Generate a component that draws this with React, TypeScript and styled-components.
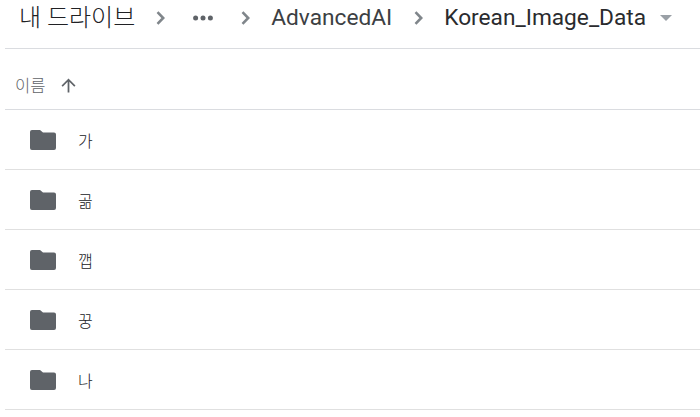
import styled, { createGlobalStyle } from "styled-components";

const GlobalStyle = createGlobalStyle`
  html, body {
    margin: 0;
    padding: 0;
    background: #fff;
    overflow: hidden;
  }
`;

const Page = styled.div`
  width: 700px;
  height: 417px;
  padding-left: 5px;
  box-sizing: border-box;
  font-family: Roboto, "Noto Sans CJK KR", sans-serif;
`;

const Breadcrumbs = styled.div`
  height: 48px;
  box-sizing: content-box;
  display: flex;
  align-items: center;
  padding-left: 14px;
  border-bottom: 1px solid #dadce0;
`;

const Crumb = styled.span`
  font-size: 22.7px;
  line-height: 24px;
  margin-bottom: 12px;
  color: #3c4043;
  white-space: nowrap;
`;

const RootCrumb = styled(Crumb)`
  font-size: 24px;
  font-weight: 300;
  color: #202124;
`;

const CurrentCrumb = styled(Crumb)`
  color: #2a2b2e;
`;

const Chevron = styled.svg<{ $before: number; $after: number }>`
  width: 9px;
  height: 14px;
  margin: 0 ${(p) => p.$after}px 12px ${(p) => p.$before}px;
  flex: none;
  fill: none;
  stroke: #80868b;
  stroke-width: 2.6;
`;

const Dots = styled.svg`
  width: 20px;
  height: 6px;
  margin-bottom: 12px;
  fill: #5f6368;
  flex: none;
`;

const Caret = styled.svg`
  width: 12px;
  height: 6px;
  margin: 0 0 12px 14px;
  fill: #9aa0a6;
  flex: none;
`;

const SortHeader = styled.div`
  height: 61px;
  display: flex;
  align-items: center;
  padding: 12px 0 0 10px;
  box-sizing: border-box;
  border-bottom: 1px solid #dadce0;
  font-size: 16.5px;
  font-weight: 300;
  color: #5f6368;
`;

const SortIcon = styled.svg`
  width: 21px;
  height: 21px;
  fill: #5f6368;
  margin-left: 13px;
`;

const Row = styled.div`
  height: 60px;
  display: flex;
  align-items: center;
  padding-left: 25px;
  box-sizing: border-box;
  border-bottom: 1px solid #e0e0e0;
`;

const FolderIcon = styled.svg`
  width: 26px;
  height: 20px;
  fill: #5f6368;
  flex: none;
`;

const RowName = styled.span`
  margin-left: 22px;
  font-size: 16px;
  font-weight: 300;
  color: #202124;
`;

const names = ["가", "곪", "깹", "꿍", "나"];

function CrumbChevron({ before, after }: { before: number; after: number }) {
  return (
    <Chevron viewBox="0 0 9 14" $before={before} $after={after}>
      <polyline points="1.5,1.2 7.2,7 1.5,12.8" />
    </Chevron>
  );
}

export default function App() {
  return (
    <Page>
      <GlobalStyle />
      <Breadcrumbs>
        <RootCrumb>내 드라이브</RootCrumb>
        <CrumbChevron before={21} after={28} />
        <Dots viewBox="0 0 20 6">
          <circle cx="2.6" cy="3" r="2.5" />
          <circle cx="10" cy="3" r="2.5" />
          <circle cx="17.4" cy="3" r="2.5" />
        </Dots>
        <CrumbChevron before={28} after={21} />
        <Crumb>AdvancedAI</Crumb>
        <CrumbChevron before={22} after={21} />
        <CurrentCrumb>Korean_Image_Data</CurrentCrumb>
        <Caret viewBox="0 0 12 6">
          <path d="M0 0h12L6 6z" />
        </Caret>
      </Breadcrumbs>
      <SortHeader>
        이름
        <SortIcon viewBox="0 0 24 24">
          <path d="M4 12l1.41 1.41L11 7.83V20h2V7.83l5.58 5.59L20 12l-8-8-8 8z" />
        </SortIcon>
      </SortHeader>
      {names.map((name) => (
        <Row key={name}>
          <FolderIcon viewBox="0 0 26 20">
            <path d="M2 0h8l3 2.5h11a2 2 0 0 1 2 2V18a2 2 0 0 1-2 2H2a2 2 0 0 1-2-2V2a2 2 0 0 1 2-2z" />
          </FolderIcon>
          <RowName>{name}</RowName>
        </Row>
      ))}
    </Page>
  );
}
